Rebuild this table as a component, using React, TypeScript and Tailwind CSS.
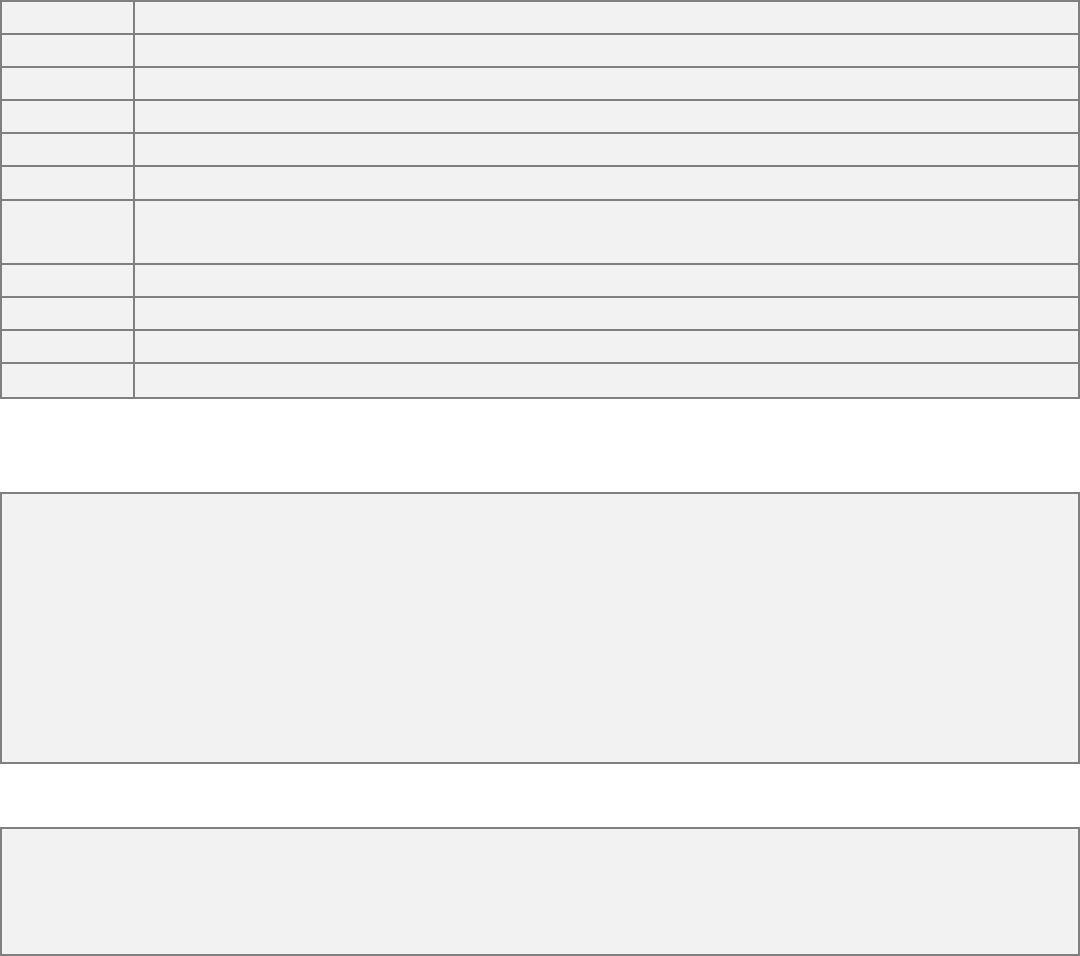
import React from "react";

const rows = [false, false, false, false, false, false, true, false, false, false, false];

const App = () => {
  return (
    <div className="min-h-screen bg-white font-['Liberation_Sans',sans-serif]">
      {/* Table */}
      <div className="border-2 border-[#808080] bg-[#f2f2f2]">
        {rows.map((tall, i) => (
          <div
            key={i}
            className={`flex ${i < rows.length - 1 ? "border-b-2 border-[#808080]" : ""} ${tall ? "h-[64px]" : "h-[33.1px]"}`}
          >
            <div className="w-[133px] shrink-0 border-r-2 border-[#808080]" />
            <div className="flex-1" />
          </div>
        ))}
      </div>

      {/* Notes box */}
      <div className="mt-[93px] h-[272px] border-2 border-[#808080] bg-[#f2f2f2]" />

      {/* Footer box */}
      <div className="mt-[63px] h-[129px] border-2 border-[#808080] bg-[#f2f2f2]" />
    </div>
  );
};

export default App;
